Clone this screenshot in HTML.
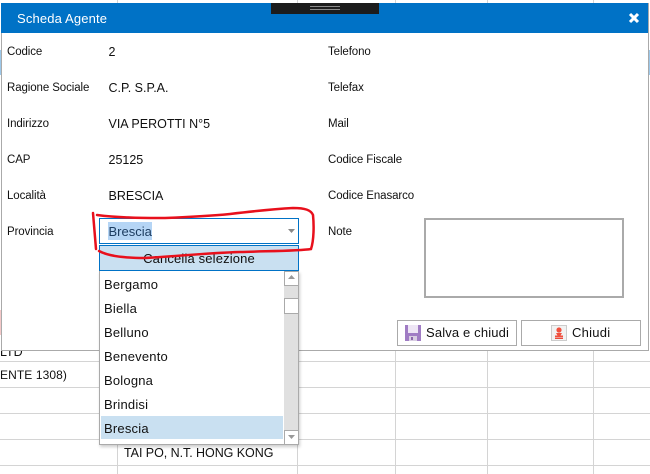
<!DOCTYPE html>
<html><head><meta charset="utf-8">
<style>
html,body{margin:0;padding:0;background:#fff}
body{width:650px;height:474px;position:relative;overflow:hidden;font-family:"Liberation Sans",sans-serif;color:#111}
.a{position:absolute}
.t{position:absolute;white-space:nowrap;line-height:16px}
.l{font-size:11.5px;left:7px;letter-spacing:-.1px}
.r{font-size:11.5px;left:328px;letter-spacing:-.1px}
.v{font-size:12.5px;left:108.500px}
.o{font-size:13px;left:104px;letter-spacing:.2px}
.hl{position:absolute;left:0;width:650px;height:1px;background:#d4d4d4}
.vl{position:absolute;top:0;width:1px;height:474px;background:#d4d4d4}
.btn{position:absolute;top:320px;height:24px;width:118px;border:1px solid #aaa;background:#fff}
</style></head><body>
<div class="hl" style="top:361px"></div><div class="hl" style="top:387px"></div><div class="hl" style="top:413px"></div><div class="hl" style="top:439px"></div><div class="hl" style="top:465px"></div>
<div class="vl" style="left:117px"></div><div class="vl" style="left:297px"></div><div class="vl" style="left:395px"></div><div class="vl" style="left:487px"></div><div class="vl" style="left:593px"></div>
<div class="a" style="left:0;top:50px;width:2px;height:25px;background:#9cc8ea"></div>
<div class="a" style="left:648px;top:50px;width:2px;height:25px;background:#9cc8ea"></div>
<div class="a" style="left:0;top:310px;width:2px;height:25px;background:#f4c8c8"></div>
<div class="t" style="left:0;top:344px;font-size:12.5px">LTD</div>
<div class="t" style="left:0;top:367px;font-size:12px;letter-spacing:.1px">ENTE 1308)</div>
<div class="t" style="left:124px;top:445px;font-size:12.5px;letter-spacing:-.05px">TAI PO, N.T. HONG KONG</div>

<div class="a" style="left:1px;top:3px;width:646px;height:347px;border:solid #aaa;border-width:0 1px 1px 1px;background:#fff"></div>
<div class="a" style="left:1px;top:3px;width:647px;height:30px;background:#0072c6"></div>
<div class="t" style="left:17px;top:11px;color:#fff;font-size:13px;letter-spacing:.15px">Scheda Agente</div>
<div class="a" style="left:271px;top:3px;width:108px;height:11px;background:#1c1c1c"></div>
<div class="a" style="left:310px;top:6px;width:30px;height:1px;background:#8a8a8a"></div>
<div class="a" style="left:310px;top:9px;width:30px;height:1px;background:#8a8a8a"></div>
<svg class="a" style="left:628px;top:12px" width="12" height="12" viewBox="0 0 12 12"><path d="M2 2L10 10M10 2L2 10" stroke="#fff" stroke-width="3"/></svg>

<div class="t l" style="top:44px">Codice</div>
<div class="t l" style="top:80px">Ragione Sociale</div>
<div class="t l" style="top:116px">Indirizzo</div>
<div class="t l" style="top:152px">CAP</div>
<div class="t l" style="top:188px">Località</div>
<div class="t l" style="top:224px">Provincia</div>
<div class="t v" style="top:44px">2</div>
<div class="t v" style="top:80px">C.P. S.P.A.</div>
<div class="t v" style="top:116px">VIA PEROTTI N°5</div>
<div class="t v" style="top:152px">25125</div>
<div class="t v" style="top:188px">BRESCIA</div>
<div class="t r" style="top:44px">Telefono</div>
<div class="t r" style="top:80px">Telefax</div>
<div class="t r" style="top:116px">Mail</div>
<div class="t r" style="top:152px">Codice Fiscale</div>
<div class="t r" style="top:188px">Codice Enasarco</div>
<div class="t r" style="top:224px">Note</div>
<div class="a" style="left:424px;top:218px;width:196px;height:76px;border:2px solid #aaa;background:#fff"></div>

<div class="btn" style="left:397px"></div>
<svg class="a" style="left:405px;top:325px" width="16" height="16" viewBox="0 0 16 16"><rect width="16" height="16" fill="#a07cc4"/><rect x="3" y="0" width="10" height="8" fill="#eee6f5"/><rect x="4" y="11" width="8" height="5" fill="#d8cde2"/><rect x="6" y="12" width="2" height="3" fill="#8a66aa"/></svg>
<div class="t" style="left:426px;top:325px;font-size:13px;letter-spacing:.15px">Salva e chiudi</div>
<div class="btn" style="left:521px"></div>
<svg class="a" style="left:551px;top:325px" width="16" height="16" viewBox="0 0 16 16"><rect x=".5" y=".5" width="15" height="15" fill="#f2f2f2" stroke="#ccc"/><circle cx="8" cy="5" r="2.600" fill="#f0503e"/><path d="M5 8h6l-1.500 2.500H12V12H4v-1.500h2.500z" fill="#f0503e"/><rect x="4" y="12.500" width="8" height="1.500" fill="#ea4a3a"/></svg>
<div class="t" style="left:572px;top:325px;font-size:13px;letter-spacing:.25px">Chiudi</div>

<div class="a" style="left:99px;top:218px;width:198px;height:24px;border:1px solid #0072c6;background:#fff"></div>
<div class="a" style="left:108px;top:222px;width:44px;height:18px;background:#b5d5f5"></div>
<div class="t" style="left:108.500px;top:224px;font-size:13px;color:#1c3c60">Brescia</div>
<svg class="a" style="left:288px;top:229px" width="7" height="4"><path d="M0 0h7L3.500 4z" fill="#888"/></svg>

<div class="a" style="left:99px;top:271px;width:198px;height:173px;border:solid #aaa;border-width:0 1px 1px 1px;background:#fff;box-shadow:1px 2px 3px rgba(0,0,0,.2)"></div>
<div class="a" style="left:99px;top:245px;width:198px;height:24px;border:1px solid #0072c6;background:#c9e0f1"></div>
<div class="t" style="left:100px;width:198px;text-align:center;top:251px;font-size:13px;letter-spacing:.15px">Cancella selezione</div>
<div class="a" style="left:101px;top:416px;width:182px;height:23px;background:#c9e0f1"></div>
<div class="t o" style="top:277px">Bergamo</div>
<div class="t o" style="top:301px">Biella</div>
<div class="t o" style="top:325px">Belluno</div>
<div class="t o" style="top:349px">Benevento</div>
<div class="t o" style="top:373px">Bologna</div>
<div class="t o" style="top:397px">Brindisi</div>
<div class="t o" style="top:421px">Brescia</div>

<div class="a" style="left:284px;top:271px;width:14px;height:173px;background:#e0e0e0"></div>
<div class="a" style="left:284px;top:271px;width:13px;height:13px;border:1px solid #aaa;background:#fff"></div>
<svg class="a" style="left:288px;top:275px" width="7" height="4"><path d="M0 4h7L3.500 0z" fill="#999"/></svg>
<div class="a" style="left:284px;top:298px;width:13px;height:14px;border:1px solid #aaa;background:#fff"></div>
<div class="a" style="left:284px;top:430px;width:13px;height:13px;border:1px solid #aaa;background:#fff"></div>
<svg class="a" style="left:288px;top:435px" width="7" height="4"><path d="M0 0h7L3.500 4z" fill="#999"/></svg>

<svg class="a" style="left:0;top:0" width="650" height="474" viewBox="0 0 650 474" fill="none"><path d="M93 213C94 225 95 237 96 249M97 215C120 218 145 218 165 218C190 217 210 216 230 214C255 211 275 209 293 208C305 208 311 210 313 215C314 225 314 240 311 249C300 251 270 251 240 252C205 253 170 257 145 258C125 258 108 256 99 251" stroke="#e8101c" stroke-width="2.500" stroke-linecap="round"/></svg>
</body></html>
